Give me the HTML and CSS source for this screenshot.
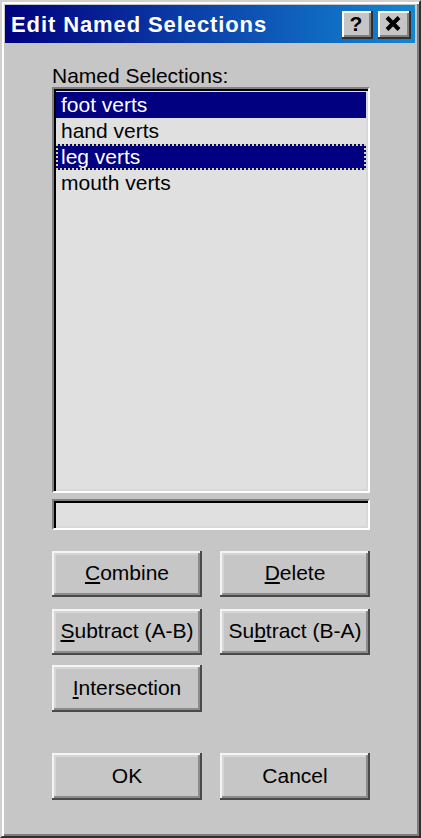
FILE: index.html
```html
<!DOCTYPE html>
<html>
<head>
<meta charset="utf-8">
<link rel="stylesheet" href="styles.css">
</head>
<body>
<div class="window">
  <div class="titlebar">
    <span class="title">Edit Named Selections</span>
    <div class="tbtns">
      <div class="tbtn help">?</div>
      <div class="tbtn close">
        <svg width="16" height="15" viewBox="0 0 16 15"><path d="M2 1.5 L14 13.5 M14 1.5 L2 13.5" stroke="#000" stroke-width="4" fill="none"/></svg>
      </div>
    </div>
  </div>
  <div class="content">
    <div class="label">Named Selections:</div>
    <div class="listbox">
      <div class="item sel">foot verts</div>
      <div class="item">hand verts</div>
      <div class="item sel focus">leg verts</div>
      <div class="item">mouth verts</div>
    </div>
    <div class="field"></div>
    <div class="row r1">
      <div class="btn"><span><u>C</u>ombine</span></div>
      <div class="btn"><span><u>D</u>elete</span></div>
    </div>
    <div class="row r2">
      <div class="btn"><span><u>S</u>ubtract (A-B)</span></div>
      <div class="btn"><span>Su<u>b</u>tract (B-A)</span></div>
    </div>
    <div class="row r3">
      <div class="btn tall"><span><u>I</u>ntersection</span></div>
    </div>
    <div class="row r4">
      <div class="btn tall"><span>OK</span></div>
      <div class="btn tall"><span>Cancel</span></div>
    </div>
  </div>
</div>
</body>
</html>
```

FILE: styles.css
```css
html, body {
  margin: 0;
  padding: 0;
  background: #c6c6c6;
}
.window {
  box-sizing: border-box;
  width: 421px;
  height: 838px;
  background: #c6c6c6;
  border: 2px solid;
  border-color: #d0d0d0 #303030 #303030 #d0d0d0;
  box-shadow: inset 2px 2px 0 #ffffff, inset -2px -2px 0 #7c7c7c;
  padding: 3px 4px 3px 3px;
  font-family: "Liberation Sans", Arial, sans-serif;
  color: #000;
}
.titlebar {
  height: 38px;
  background: linear-gradient(to right, #00007e 0%, #0b3ea8 45%, #1287d2 100%);
  display: flex;
  align-items: center;
  justify-content: space-between;
  padding: 0 4px 0 6px;
}
.title {
  color: #fff;
  font-weight: bold;
  font-size: 22px;
  letter-spacing: 0.9px;
  line-height: 38px;
  padding-top: 2px;
}
.tbtns {
  display: flex;
  gap: 5px;
  align-items: center;
  padding-top: 1px;
}
.tbtn {
  box-sizing: border-box;
  width: 31px;
  height: 28px;
  background: #c6c6c6;
  box-shadow: inset -2px -2px 0 #303030, inset 2px 2px 0 #ffffff, inset -4px -4px 0 #808080;
  display: flex;
  align-items: center;
  justify-content: center;
}
.tbtn.help {
  font-weight: bold;
  font-size: 21px;
  line-height: 28px;
  padding: 0 3px 1px 0;
}
.tbtn.close {
  width: 33px;
  padding: 0 3px 2px 0;
}
.tbtn svg { display: block; }
.content {
  padding: 0 45px 0 47px;
}
.label {
  margin-top: 21px;
  font-size: 21px;
  line-height: 23px;
  height: 23px;
}
.listbox {
  box-sizing: border-box;
  height: 406px;
  border: 2px solid;
  border-color: #808080 #ffffff #ffffff #808080;
  box-shadow: inset 2px 2px 0 #000000, inset -2px -2px 0 #d8d8d8;
  background: #e0e0e0;
  padding: 3px 2px 3px 2px;
}
.item {
  height: 26px;
  line-height: 26px;
  font-size: 21px;
  padding-left: 5px;
  box-sizing: border-box;
}
.item.sel {
  background: #000080;
  color: #ffffff;
}
.item.focus {
  outline: 2px dotted #d8d890;
  outline-offset: -2px;
}
.field {
  box-sizing: border-box;
  margin-top: 6px;
  height: 31px;
  border: 2px solid;
  border-color: #808080 #ffffff #ffffff #808080;
  box-shadow: inset 2px 2px 0 #000000, inset -2px -2px 0 #d8d8d8;
  background: #e0e0e0;
}
.row {
  display: flex;
  gap: 18px;
}
.r1 { margin-top: 21px; }
.r2 { margin-top: 12px; }
.r3 { margin-top: 10px; }
.r4 { margin-top: 41px; }
.btn {
  box-sizing: border-box;
  width: 150px;
  height: 46px;
  background: #c6c6c6;
  box-shadow: inset -2px -2px 0 #4a4a4a, inset 2px 2px 0 #f4f4f4, inset -4px -4px 0 #8c8c8c, inset 4px 4px 0 #d6d6d6;
  display: flex;
  align-items: center;
  justify-content: center;
  font-size: 21px;
}
.btn.tall { height: 47px; }
.btn span {
  padding-bottom: 2px;
}
.btn u {
  text-decoration-thickness: 2px;
  text-underline-offset: 2px;
}
```
